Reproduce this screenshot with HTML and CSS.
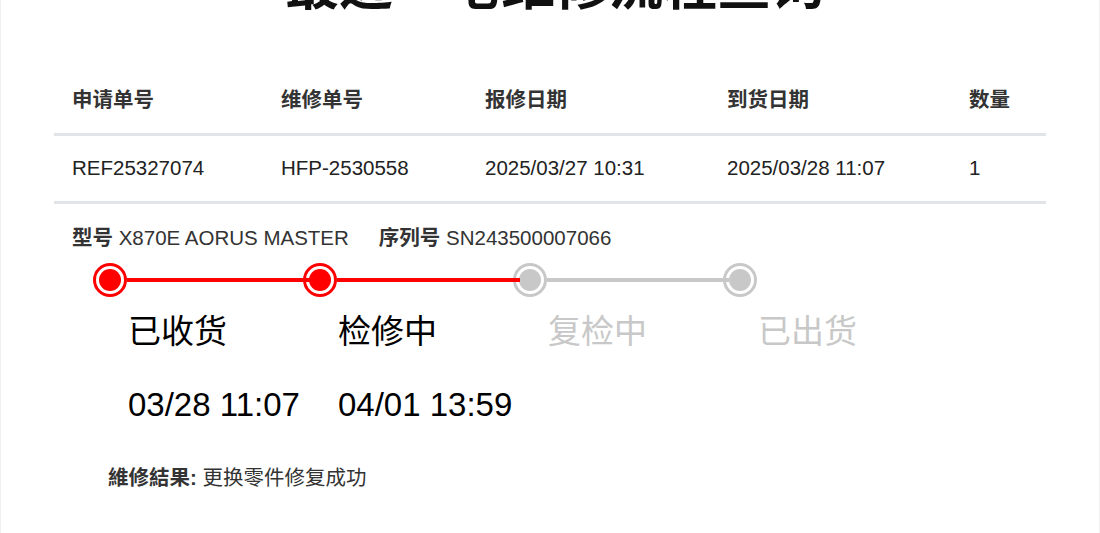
FILE: index.html
```html
<!DOCTYPE html>
<html lang="zh">
<head>
    <meta charset="UTF-8">
    <title>维修流程查询</title>
    <link rel="stylesheet" href="styles.css">
</head>
<body>
    <div class="page">
        <h1 class="title">最近一笔维修流程查询</h1>

        <table class="order-table">
            <thead>
                <tr>
                    <th class="col-ref">申请单号</th>
                    <th class="col-rma">维修单号</th>
                    <th class="col-date">报修日期</th>
                    <th class="col-date">到货日期</th>
                    <th class="col-qty">数量</th>
                </tr>
            </thead>
            <tbody>
                <tr>
                    <td>REF25327074</td>
                    <td>HFP-2530558</td>
                    <td>2025/03/27 10:31</td>
                    <td>2025/03/28 11:07</td>
                    <td>1</td>
                </tr>
            </tbody>
        </table>

        <div class="product">
            <span><b>型号</b> X870E AORUS MASTER</span>
            <span><b>序列号</b> SN243500007066</span>
        </div>

        <!-- Progreso de la reparación -->
        <div class="timeline">
            <div class="step done">
                <div class="step-marker"><span class="dot"></span><span class="line"></span></div>
                <div class="step-name">已收货</div>
                <div class="step-time">03/28 11:07</div>
            </div>
            <div class="step done">
                <div class="step-marker"><span class="dot"></span><span class="line"></span></div>
                <div class="step-name">检修中</div>
                <div class="step-time">04/01 13:59</div>
            </div>
            <div class="step">
                <div class="step-marker"><span class="dot"></span><span class="line"></span></div>
                <div class="step-name">复检中</div>
            </div>
            <div class="step last">
                <div class="step-marker"><span class="dot"></span></div>
                <div class="step-name">已出货</div>
            </div>
        </div>

        <p class="result"><b>維修結果:</b> 更换零件修复成功</p>
    </div>
</body>
</html>
```

FILE: styles.css
```css
body {
    margin: 0;
    background: #ffffff;
    font-family: "Liberation Sans", "Noto Sans CJK SC", sans-serif;
    color: #222;
}

.page {
    border-left: 1px solid #f0f0f0;
    border-right: 1px solid #f0f0f0;
    padding: 0 53px;
    min-height: 533px;
    box-sizing: border-box;
    overflow: hidden;
}

.title {
    font-family: "Noto Sans CJK SC", sans-serif;
    font-size: 54px;
    font-weight: 700;
    line-height: 64px;
    text-align: center;
    color: #111;
    margin: -50px 0 0 10px;
}

.order-table {
    width: 100%;
    table-layout: fixed;
    border-collapse: collapse;
    margin-top: 54px;
    font-size: 20.5px;
}

.order-table th,
.order-table td {
    box-sizing: border-box;
    text-align: left;
    padding: 18px 18px 19px;
    line-height: 28px;
    border-bottom: 3px solid #e1e4e8;
    white-space: nowrap;
}

.order-table th {
    font-weight: 700;
    color: #333;
}

.col-ref { width: 209px; }
.col-rma { width: 204px; }
.col-date { width: 242px; }

.product {
    display: flex;
    gap: 30px;
    padding-left: 18px;
    margin-top: 20px;
    font-size: 20.5px;
    line-height: 28px;
    color: #333;
}

.timeline {
    display: flex;
    padding-left: 39px;
    margin-top: 11px;
}

.step {
    width: 210px;
}

.step.last {
    width: auto;
}

.step-marker {
    display: flex;
    align-items: center;
    height: 34px;
}

.dot {
    flex-shrink: 0;
    width: 34px;
    height: 34px;
    box-sizing: border-box;
    border: 3px solid #c8c8c8;
    border-radius: 50%;
    background: #fff;
    display: flex;
    align-items: center;
    justify-content: center;
}

.dot::after {
    content: "";
    width: 22px;
    height: 22px;
    border-radius: 50%;
    background: #c8c8c8;
}

.line {
    flex: 1;
    height: 4px;
    background: #c8c8c8;
    margin-right: -7px;
    position: relative; /* encima del siguiente círculo */
    z-index: 1;
}

.done .dot { border-color: #ff0000; }
.done .dot::after { background: #ff0000; }
.done .line { background: #ff0000; }

.step-name,
.step-time {
    padding-left: 35px;
    font-size: 33px;
    line-height: 40px;
    color: #000;
    white-space: nowrap;
}

.step-name {
    margin-top: 15px;
}

.step-time {
    margin-top: 33px;
}

.step:not(.done) .step-name {
    color: #c8c8c8;
}

.result {
    margin: 39px 0 0;
    padding-left: 54px;
    font-size: 20.5px;
    line-height: 28px;
    color: #333;
}
```
